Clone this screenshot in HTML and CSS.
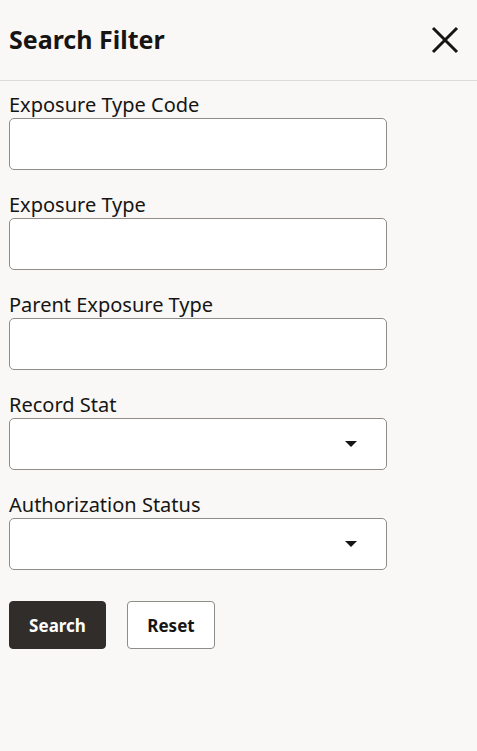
FILE: index.html
```html
<!DOCTYPE html>
<html lang="en">
<head>
<meta charset="utf-8">
<title>Search Filter</title>
<link rel="stylesheet" href="styles.css">
</head>
<body>
<div class="panel">
  <header class="head">
    <h1 class="title">Search Filter</h1>
    <button class="close" aria-label="Close">
      <svg width="28" height="28" viewBox="0 0 28 28"><path d="M2 2 L26 26 M26 2 L2 26" stroke="#161513" stroke-width="3" fill="none"/></svg>
    </button>
  </header>
  <form class="form">
    <div class="field">
      <label class="label">Exposure Type Code</label>
      <div class="input"></div>
    </div>
    <div class="field">
      <label class="label">Exposure Type</label>
      <div class="input"></div>
    </div>
    <div class="field">
      <label class="label">Parent Exposure Type</label>
      <div class="input"></div>
    </div>
    <div class="field">
      <label class="label">Record Stat</label>
      <div class="input select"><span class="caret"></span></div>
    </div>
    <div class="field">
      <label class="label">Authorization Status</label>
      <div class="input select"><span class="caret"></span></div>
    </div>
    <div class="actions">
      <button type="button" class="btn primary">Search</button>
      <button type="button" class="btn secondary">Reset</button>
    </div>
  </form>
</div>
</body>
</html>
```
FILE: styles.css
```css
html, body {
  margin: 0;
  padding: 0;
  background: #f9f8f6;
}
body {
  font-family: "Noto Sans", "Open Sans", sans-serif;
  color: #161513;
  width: 477px;
  height: 751px;
  overflow: hidden;
}
.head {
  height: 81px;
  border-bottom: 1px solid #dedcd9;
  display: flex;
  align-items: center;
  justify-content: space-between;
  padding: 0 18px 0 9px;
  box-sizing: border-box;
}
.title {
  margin: 0;
  font-size: 25px;
  font-weight: 700;
  line-height: 1;
  position: relative;
  top: -1px;
}
.close {
  border: 0;
  background: none;
  padding: 0;
  width: 28px;
  height: 28px;
  display: flex;
}
.form {
  padding: 11px 0 0 9px;
  display: flex;
  flex-direction: column;
}
.field {
  display: flex;
  flex-direction: column;
  height: 100px;
}
.label {
  font-size: 20px;
  line-height: 26px;
  height: 26px;
}
.input {
  width: 378px;
  height: 52px;
  box-sizing: border-box;
  border: 1px solid #8f8d8a;
  border-radius: 5px;
  background: #fff;
  display: flex;
  align-items: center;
  justify-content: flex-end;
  padding-right: 29px;
}
.caret {
  width: 0;
  height: 0;
  border-left: 6px solid transparent;
  border-right: 6px solid transparent;
  border-top: 6px solid #161513;
}
.actions {
  display: flex;
  gap: 21px;
  margin-top: 9px;
}
.btn {
  height: 48px;
  border-radius: 4px;
  font-family: inherit;
  font-size: 17px;
  font-weight: 700;
  padding: 0;
}
.primary {
  background: #312d2a;
  color: #fff;
  border: 1px solid #312d2a;
  width: 97px;
}
.secondary {
  background: #fff;
  color: #161513;
  border: 1px solid #8f8d8a;
  width: 88px;
}
```
